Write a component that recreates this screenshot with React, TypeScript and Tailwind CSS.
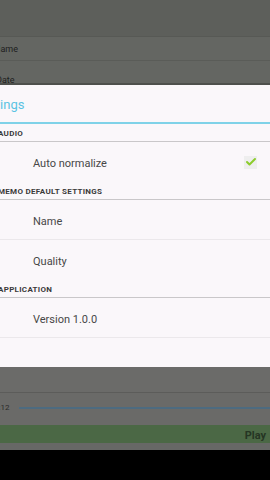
import { Check } from 'lucide-react';

const Header = ({ label }: { label: string }) => (
  <div className="h-[18px] flex items-center border-b border-[#c9c7c9] pl-[1px] pt-[3px]">
    <span className="ml-[-3px] text-[8px] font-bold tracking-[0.3px] text-[#3a3a3a] leading-none">{label}</span>
  </div>
);

const Item = ({ label, divider, children }: { label: string; divider?: boolean; children?: React.ReactNode }) => (
  <div className={`h-[40px] flex items-center justify-between pl-[33px] pr-[16px] pt-[5px] ${divider ? 'border-b border-[#ebe8eb]' : ''}`}>
    <span className="text-[11px] text-[#474747]">{label}</span>
    {children}
  </div>
);

export default function App() {
  return (
    <div className="w-[270px] h-[480px] overflow-hidden flex flex-col bg-black" style={{ fontFamily: 'Roboto, "Noto Sans", sans-serif' }}>
      {/* background activity, dimmed */}
      <div className="h-[37px] bg-[#5d5f5b] border-b border-[#575955]" />
      <div className="h-[24px] bg-[#646662] border-b border-[#5a5c58] flex items-center pt-[3px]">
        <span className="ml-[-6px] text-[9px] text-[#1e1e1e]">Name</span>
      </div>
      <div className="h-[24px] bg-[#646662] border-b-2 border-[#4e504c] flex items-end overflow-hidden">
        <span className="ml-[-4px] mb-[-4px] text-[9px] text-[#1e1e1e]">Date</span>
      </div>

      {/* settings dialog */}
      <div className="h-[282px] bg-[#faf7fa] flex flex-col">
        <div className="h-[39px] flex items-center border-b-2 border-[#7fd2e8] pt-[2px]">
          <span className="ml-[-23px] text-[13px] text-[#5bc3e3]">Settings</span>
        </div>
        <Header label="AUDIO" />
        <Item label="Auto normalize">
          <div className="w-[13px] h-[13px] bg-[#eeeeee] flex items-center justify-center mr-[-3px] mt-[-5px]">
            <Check size={12} strokeWidth={4} className="text-[#8ccc2c]" />
          </div>
        </Item>
        <Header label="MEMO DEFAULT SETTINGS" />
        <Item label="Name" divider />
        <Item label="Quality" />
        <Header label="APPLICATION" />
        <Item label="Version 1.0.0" divider />
      </div>

      <div className="h-[26px] bg-[#6b6b69] border-b border-[#5c5c5a]" />
      <div className="h-[32px] bg-[#6a6a68] flex items-center pb-[2px]">
        <span className="ml-[-6px] text-[8px] text-[#2a2a2a]">0:12</span>
        <div className="ml-[10px] flex-1 h-[2px] bg-[#4d6b80]" />
      </div>
      <div className="h-[18px] bg-[#4b6845] flex items-center justify-end pr-[4px] pt-[4px]">
        <span className="text-[11px] font-bold text-[#253523]">Play</span>
      </div>
      <div className="h-[7px] bg-[#676866]" />
      <div className="flex-1 bg-black" />
    </div>
  );
}
